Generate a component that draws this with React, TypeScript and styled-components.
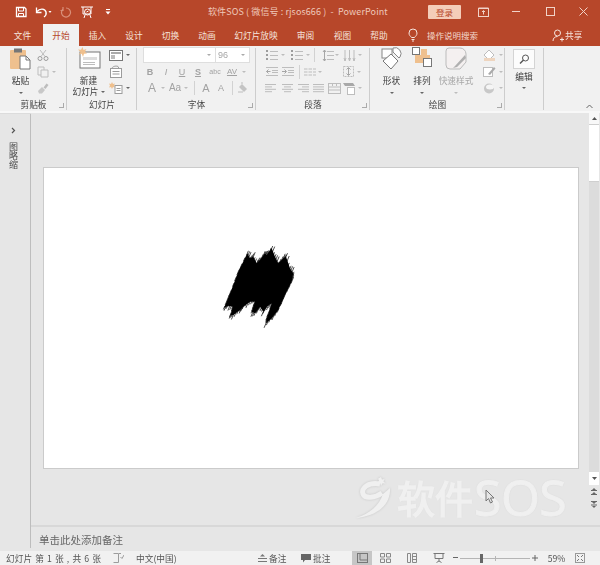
import React from "react";
import styled, { createGlobalStyle } from "styled-components";

const Global = createGlobalStyle`
  html, body { margin: 0; padding: 0; background: #e6e6e6; }
  body { font-family: "Noto Sans CJK SC", "Noto Sans", sans-serif; }
`;

const DK = "#555";
const MD = "#9c9c9c";
const LT = "#bdbdbd";
const OR = "#efc08e";

const Page = styled.div`
  position: relative; width: 600px; height: 565px; overflow: hidden;
  display: flex; flex-direction: column; filter: blur(0.3px);
`;
const TitleBar = styled.div`
  height: 23px; background: #b7472a; display: flex; align-items: center; flex: none;
`;
const Qat = styled.div`
  width: 208px; display: flex; align-items: center; padding-left: 15px; box-sizing: border-box;
`;
const Sp = styled.span<{ $w: number }>`
  display: block; width: ${p => p.$w}px; flex: none;
`;
const Title = styled.div`
  width: 220px; color: #efc9bb; font-size: 9px; white-space: pre; letter-spacing: .1px;
`;
const Login = styled.div`
  width: 33px; height: 14px; background: #f4cdb9; color: #b7472a; font-size: 8.5px; border-radius: 1px;
  display: flex; align-items: center; justify-content: center; flex: none;
`;
const WinBtn = styled.div<{ $w: number }>`
  width: ${p => p.$w}px; height: 23px; display: flex; align-items: center; justify-content: center; flex: none;
`;
const TabBar = styled.div`
  height: 23px; background: #b7472a; display: flex; align-items: flex-end; padding-left: 2px; flex: none;
`;
const Tab = styled.div<{ $active?: boolean; $w: number }>`
  width: ${p => p.$w}px; height: 22px; flex: none; display: flex; align-items: center; justify-content: center;
  font-size: 8.7px; white-space: nowrap;
  color: ${p => (p.$active ? "#b7472a" : "#f6e4dd")};
  background: ${p => (p.$active ? "#f1f1f1" : "transparent")};
`;
const Search = styled.div`
  display: flex; align-items: center; height: 22px; gap: 9px; margin-left: 11px; color: #f3d8cd; font-size: 8.5px; white-space: nowrap;
`;
const Share = styled.div`
  display: flex; align-items: center; height: 22px; gap: 1px; margin-left: 74px; color: #f6e4dd; font-size: 8.7px; white-space: nowrap;
`;
const Ribbon = styled.div`
  position: relative; height: 65px; background: #f1f1f1; display: flex; flex: none; border-bottom: 2px solid #f8f8f8;
  box-shadow: 0 1px 0 #dcdcdc;
`;
const Group = styled.div<{ $w: number }>`
  position: relative; width: ${p => p.$w}px; flex: none; box-sizing: border-box;
  display: flex; flex-direction: column;
  &::after {
    content: ""; position: absolute; right: 0; top: 2px; bottom: 1px; width: 1px; background: #cdcdcd;
  }
`;
const GroupBody = styled.div<{ $pl: number; $gap?: number }>`
  height: 53px; display: flex; padding: 1px 0 0 ${p => p.$pl}px; gap: ${p => p.$gap ?? 0}px; box-sizing: border-box;
`;
const GroupLabel = styled.div`
  height: 12px; line-height: 12px; text-align: center; font-size: 8.7px; color: #444; white-space: nowrap;
`;
const Launcher = styled.div`
  position: absolute; right: 3px; bottom: 3px; width: 5px; height: 5px; border-left: 1px solid #aaa; border-bottom: 1px solid #aaa;
  box-sizing: border-box; transform: scaleX(-1);
`;
const BigBtn = styled.div<{ $w: number; $dim?: boolean }>`
  width: ${p => p.$w}px; display: flex; flex-direction: column; align-items: center; flex: none;
  font-size: 8.7px; line-height: 10.5px; color: ${p => (p.$dim ? "#a8a8a8" : "#3c3c3c")}; white-space: nowrap;
`;
const BigIcon = styled.div<{ $h: number }>`
  height: ${p => p.$h}px; display: flex; align-items: flex-start; justify-content: center; flex: none;
`;
const Arrow = styled.span<{ $c?: string; $ml?: number }>`
  display: inline-block; flex: none; width: 0; height: 0; border-left: 2px solid transparent; border-right: 2px solid transparent;
  border-top: 2.5px solid ${p => p.$c ?? "#666"}; margin-left: ${p => p.$ml ?? 0}px; vertical-align: middle;
`;
const Rows = styled.div<{ $w?: number }>`
  display: flex; flex-direction: column; ${p => (p.$w ? `width:${p.$w}px;` : "")} flex: none;
`;
const Row = styled.div<{ $gap?: number; $pl?: number }>`
  height: 16.5px; display: flex; align-items: center; gap: ${p => p.$gap ?? 0}px; padding-left: ${p => p.$pl ?? 0}px;
`;
const ComboRow = styled.div`
  display: flex; height: 16px; width: 107px; background: #fff; border: 1px solid #dedede; box-sizing: border-box; margin-bottom: .5px;
`;
const ComboPart = styled.div<{ $w: number; $line?: boolean }>`
  width: ${p => p.$w}px; display: flex; align-items: center; justify-content: space-between; padding: 0 4px 0 2px; box-sizing: border-box;
  font-size: 9px; color: #a6a6a6; font-family: "Liberation Sans", sans-serif;
  ${p => (p.$line ? "border-right: 1px solid #dedede;" : "")}
`;
const Fmt = styled.span<{ $w: number; $b?: boolean; $i?: boolean; $u?: boolean; $s?: number }>`
  width: ${p => p.$w}px; flex: none; text-align: center; font-family: "Liberation Sans", sans-serif; color: #a2a2a2;
  font-size: ${p => p.$s ?? 9}px; line-height: 12px;
  font-weight: ${p => (p.$b ? 700 : 400)}; font-style: ${p => (p.$i ? "italic" : "normal")};
  text-decoration: ${p => (p.$u ? "underline" : "none")};
`;
const VSep = styled.span`
  width: 1px; height: 14px; background: #d2d2d2; flex: none;
`;
const EditBox = styled.div`
  width: 22px; height: 20px; background: #fcfcfc; border: 1px solid #d4d4d4; box-sizing: border-box;
  display: flex; align-items: center; justify-content: center; margin: 2px 0 3px;
`;
const Collapse = styled.div`
  position: absolute; right: 7px; bottom: 2px; display: flex;
`;
const Main = styled.div`
  flex: 1; display: flex; min-height: 0;
`;
const Side = styled.div`
  width: 31px; box-sizing: border-box; border-right: 1px solid #bdbdbd; background: #e6e6e6; flex: none;
  display: flex; flex-direction: column; align-items: center; padding: 14px 3px 0 0; gap: 8px; margin-bottom: 3px;
`;
const SideText = styled.div`
  width: 9px; font-size: 9px; line-height: 9px; color: #4a4a4a; text-align: center;
`;
const Work = styled.div`
  flex: 1; display: flex; flex-direction: column; min-width: 0;
`;
const Canvas = styled.div`
  position: relative; flex: 1; display: flex; background: #e6e6e6; min-height: 0;
`;
const SlideArea = styled.div`
  flex: 1; padding: 54px 0 0 12px; min-width: 0;
`;
const Slide = styled.div`
  position: relative; width: 536px; height: 302px; box-sizing: border-box; background: #fff; border: 1px solid #cbcbcb;
`;
const Scribble = styled.svg`
  position: absolute; left: 178px; top: 78px;
`;
const Scroll = styled.div`
  width: 10px; flex: none; display: flex; flex-direction: column; margin: 0 1px 15px 0;
`;
const ScrollBtn = styled.div<{ $h: number; $bg?: string }>`
  height: ${p => p.$h}px; background: ${p => p.$bg ?? "transparent"}; display: flex; align-items: center; justify-content: center; flex: none;
  box-sizing: border-box;
`;
const Thumb = styled.div`
  height: 58px; background: #fff; flex: none; border-top: 1px solid #cfcfcf; border-bottom: 1px solid #cfcfcf; box-sizing: border-box;
`;
const Track = styled.div`
  flex: 1; background: #dcdcdc;
`;
const Notes = styled.div`
  height: 26px; flex: none; box-sizing: border-box; border-top: 2px solid #d8d8d8; background: #e6e6e6; padding-left: 8px;
  display: flex; align-items: center; font-size: 10.5px; color: #666;
`;
const Watermark = styled.div`
  position: absolute; left: 324px; top: 362px; display: flex; align-items: center; color: #f0f0f0; gap: 5px;
  text-shadow: 0 0 1.5px #c4c4c4;
`;
const WmCjk = styled.span`
  font-size: 38px; line-height: 44px; white-space: nowrap; -webkit-text-stroke: 1.5px #f0f0f0;
`;
const WmLatin = styled.span`
  font-family: "Open Sans", sans-serif; font-size: 50px; line-height: 44px; letter-spacing: -.5px; margin-left: -4px;
  -webkit-text-stroke: 1px #f0f0f0;
`;
const WmLogo = styled.div`
  filter: drop-shadow(0 0 1px #c4c4c4); flex: none;
`;
const Cursor = styled.svg`
  position: absolute; left: 454px; top: 376px;
`;
const Status = styled.div`
  height: 14px; background: #f1f1f1; display: flex; align-items: center; flex: none; font-size: 8.7px; color: #555; white-space: pre;
`;
const SItem = styled.div<{ $w: number; $on?: boolean; $center?: boolean; $ws?: number }>`
  width: ${p => p.$w}px; height: 14px; flex: none; display: flex; align-items: center; gap: 2px;
  word-spacing: ${p => p.$ws ?? 0}px;
  justify-content: ${p => (p.$center ? "center" : "flex-start")};
  background: ${p => (p.$on ? "#c6c6c6" : "transparent")};
`;
const ZoomTrack = styled.div`
  position: relative; width: 70px; height: 1px; background: #b5b5b5; flex: none;
`;
const ZoomThumb = styled.div`
  position: absolute; left: 20px; top: -4px; width: 3px; height: 9px; background: #666;
`;
const ZoomTick = styled.div`
  position: absolute; left: 35px; top: -2px; width: 1px; height: 5px; background: #b5b5b5;
`;

const I = ({ w, h, children }: { w: number; h: number; children: React.ReactNode }) => (
  <svg width={w} height={h} viewBox={`0 0 ${w} ${h}`} fill="none" style={{ flex: "none", display: "block" }}>{children}</svg>
);

const Lines = ({ x, ys, w, c }: { x: number; ys: number[]; w: number; c: string }) => (
  <>{ys.map(y => <path key={y} d={`M${x} ${y + .5}h${w}`} stroke={c} />)}</>
);
const ListIcon = () => (
  <I w={14} h={12}>
    {[1, 5, 9].map(y => <rect key={y} x={1} y={y} width={2} height={2} fill={MD} />)}
    <Lines x={5} ys={[2, 6, 10]} w={8} c={LT} />
  </I>
);
const Align = ({ v }: { v: number }) => {
  const ws = v === 3 ? [11, 11, 11, 11] : [11, 7, 11, 7];
  return (
    <I w={11} h={10}>
      {ws.map((w, i) => {
        const x = v === 1 ? (11 - w) / 2 : v === 2 ? 11 - w : 0;
        return <path key={i} d={`M${x} ${1.5 + i * 2.4}h${w}`} stroke={LT} />;
      })}
    </I>
  );
};
const Indent = ({ flip }: { flip?: boolean }) => (
  <I w={13} h={11}>
    <Lines x={1} ys={[1, 9]} w={12} c={LT} />
    <Lines x={7} ys={[4, 6]} w={6} c={LT} />
    <path d={flip ? "M1 5.5h4M3.5 3.5l2 2-2 2" : "M5.5 5.5h-4M3.5 3.5l-2 2 2 2"} stroke="#a6a6a6" />
  </I>
);

const outline: [number, number][] = [
  [2, 62], [8.7, 45.7], [16.3, 25.7], [25.3, 7.3], [28, 12.3], [31.3, 10.7], [34.7, 17.3], [38, 14], [43, 7.3], [44.7, 9],
  [49.7, 2.3], [53, 10.7], [56.3, 17.3], [61.3, 12.3], [64, 10.7], [68, 22.3], [71.3, 27.3], [69.7, 35.7], [63, 49], [56.3, 64],
  [49.7, 72.3], [44, 77.3], [45.3, 70.7], [49.7, 57.3], [44.7, 60.7], [41.3, 65.7], [38, 60.7], [33, 67.3], [29.7, 65.7], [33, 55.7],
  [28, 55.7], [21.3, 60.7], [18, 64], [11.3, 69], [8.7, 69], [10.7, 60.7], [6.3, 59.7],
];
const scribblePath = "M" + outline.map(p => p.join(" ")).join("L") + "Z";
const fringe = outline.flatMap(([x, y], i) => {
  const [nx, ny] = outline[(i + 1) % outline.length];
  const up = i >= 3 && i < 18;
  return [0, 0.33, 0.66].map((t, j) => {
    const px = x + (nx - x) * t;
    const py = y + (ny - y) * t;
    const len = 1.5 + ((i * 7 + j * 5) % 4);
    const dir = up ? -1 : 1;
    return `M${(px + dir * 0.8).toFixed(1)} ${(py - dir * 2).toFixed(1)}l${(-dir * 0.42 * (len + 2)).toFixed(1)} ${(dir * (len + 2)).toFixed(1)}`;
  });
}).join("");

export default function App() {
  return (
    <Page>
      <Global />
      <TitleBar>
        <Qat>
          <I w={12} h={12}>
            <path d="M1.5 1.5h8l1.5 1.5v7.5h-9.5z" stroke="#fff" strokeWidth="1.3" />
            <path d="M3.5 2v3h5V2M3.5 11V7.5h5V11" stroke="#fff" />
          </I>
          <Sp $w={8} />
          <I w={17} h={12}>
            <path d="M2 5.5c3-3.5 8-3 9 .5.5 2-.5 4-2 5" stroke="#fff" strokeWidth="1.4" />
            <path d="M1.5 1.5v5h5" stroke="#fff" strokeWidth="1.3" />
            <path d="M13.5 5h3l-1.5 2z" fill="#fff" />
          </I>
          <Sp $w={8} />
          <I w={12} h={12}>
            <path d="M6 2a4.5 4.5 0 1 1-3.5 1.7M3 1v3.5H.5" stroke="#d98f79" strokeWidth="1.2" />
          </I>
          <Sp $w={8} />
          <I w={14} h={14}>
            <path d="M1 2h12M3 2v7h8V2" stroke="#fff" />
            <circle cx="7.5" cy="7" r="3" stroke="#fff" />
            <path d="M6.5 7l2-1M5 10l-1 3M10 10l1 3" stroke="#fff" />
          </I>
          <Sp $w={11} />
          <I w={6} h={7}>
            <path d="M1 1.5h4" stroke="#fff" />
            <path d="M.5 3.5h5L3 6.5z" fill="#fff" />
          </I>
        </Qat>
        <Title>软件SOS ( 微信号 : rjsos666 )  -  PowerPoint</Title>
        <Login>登录</Login>
        <WinBtn $w={44}>
          <I w={11} h={10}>
            <rect x=".5" y="1.5" width="10" height="8" stroke="#f1d3c8" />
            <path d="M.5 1h10M5.5 7.5V4M4 5l1.5-1.5L7 5" stroke="#f1d3c8" />
          </I>
        </WinBtn>
        <WinBtn $w={22}>
          <I w={8} h={2}><path d="M0 .5h8" stroke="#f1d3c8" /></I>
        </WinBtn>
        <WinBtn $w={46}>
          <I w={9} h={9}><rect x=".5" y=".5" width="8" height="8" stroke="#f1d3c8" /></I>
        </WinBtn>
        <WinBtn $w={20}>
          <I w={9} h={9}><path d="M.5.5l8 8M8.5.5l-8 8" stroke="#f1d3c8" /></I>
        </WinBtn>
      </TitleBar>

      <TabBar>
        <Tab $w={41}>文件</Tab>
        <Tab $w={36} $active>开始</Tab>
        <Tab $w={37}>插入</Tab>
        <Tab $w={36}>设计</Tab>
        <Tab $w={37}>切换</Tab>
        <Tab $w={36}>动画</Tab>
        <Tab $w={62}>幻灯片放映</Tab>
        <Tab $w={37}>审阅</Tab>
        <Tab $w={37}>视图</Tab>
        <Tab $w={36}>帮助</Tab>
        <Search>
          <I w={10} h={14}>
            <path d="M3.5 9.5C2.5 8 1 7.500 1 5a4 4 0 0 1 8 0c0 2.500-1.500 3-2.500 4.500zM3.500 11.500h3M4 13h2" stroke="#f6e4dd" />
          </I>
          操作说明搜索
        </Search>
        <Share>
          <I w={12} h={13}>
            <circle cx="5.500" cy="4" r="3" stroke="#f6e4dd" />
            <path d="M1 12c0-3 2-4.500 4.500-4.500M8 10.500h4M10 8.500v4" stroke="#f6e4dd" />
          </I>
          共享
        </Share>
      </TabBar>

      <Ribbon>
        <Group $w={67}>
          <GroupBody $pl={7} $gap={3}>
            <BigBtn $w={27}>
              <BigIcon $h={29}>
                <I w={21} h={24}>
                  <rect x="0" y="3" width="16" height="19" rx="1" fill={OR} />
                  <rect x="4" y="1.500" width="8" height="4" fill="#777" />
                  <path d="M10 9h6l4 4v9H10z" fill="#fff" stroke="#777" />
                  <path d="M16 9v4h4" stroke="#777" />
                </I>
              </BigIcon>
              粘贴
              <BigIcon $h={10}><Arrow style={{ marginTop: 5 }} /></BigIcon>
            </BigBtn>
            <Rows>
              <Row>
                <I w={12} h={12}>
                  <path d="M3 1l5 6.500M9 1L4 7.500" stroke={LT} />
                  <circle cx="3" cy="9.500" r="2" stroke={MD} />
                  <circle cx="9" cy="9.500" r="2" stroke={MD} />
                </I>
              </Row>
              <Row $gap={3}>
                <I w={12} h={12}>
                  <path d="M1 1h6v8H1z" stroke={LT} />
                  <path d="M4 4h7v7H4z" fill="#f1f1f1" stroke={LT} />
                </I>
                <Arrow $c={LT} />
              </Row>
              <Row>
                <I w={12} h={12}>
                  <path d="M6.500 5.500l3-4 2 1.500-3 4z" fill={LT} />
                  <path d="M1 9l4-4 3 3-3 3.500H2z" fill="#c8c8c8" />
                </I>
              </Row>
            </Rows>
          </GroupBody>
          <GroupLabel>剪贴板</GroupLabel>
          <Launcher />
        </Group>

        <Group $w={70}>
          <GroupBody $pl={4} $gap={3}>
            <BigBtn $w={35}>
              <BigIcon $h={29}>
                <I w={24} h={24}>
                  <rect x="3" y="5" width="20" height="16" fill="#fff" stroke="#777" />
                  <rect x="6" y="10" width="14" height="3" fill="#ddd" />
                  <Lines x={6} ys={[15, 17]} w={12} c={LT} />
                  <path d="M5.500 0l1 3 3-1-1.500 2.500 2 2-3 .2L6 10 4.800 6.800l-3 .7 1.700-2.500L1 2.500l3 .2z" fill={OR} />
                </I>
              </BigIcon>
              新建
              <span>幻灯片<Arrow $ml={2} /></span>
            </BigBtn>
            <Rows>
              <Row $gap={3}>
                <I w={14} h={11}>
                  <rect x=".5" y=".5" width="13" height="10" fill="#fff" stroke="#777" />
                  <rect x="2" y="2" width="10" height="2" fill="#aaa" />
                  <rect x="2" y="5" width="4" height="4" fill="#bbb" />
                </I>
                <Arrow />
              </Row>
              <Row>
                <I w={14} h={13}>
                  <rect x="1.500" y="3.500" width="11" height="9" fill="#fff" stroke={MD} />
                  <path d="M3 3.500C3 1.500 7 .5 9 1.500l1 2M3.500 6.500h7M3.500 9h7" stroke={MD} />
                </I>
              </Row>
              <Row $gap={3}>
                <I w={14} h={13}>
                  <path d="M3 0l1 2 2-.5L5 3.500l1 2-2-.5L3 7 2 5 0 5.500l1-2-1-2 2 .5z" fill={OR} />
                  <rect x="6" y="3.500" width="7" height="8" fill="#fff" stroke={MD} />
                  <Lines x={7.500} ys={[6, 8]} w={4} c={MD} />
                </I>
                <Arrow />
              </Row>
            </Rows>
          </GroupBody>
          <GroupLabel>幻灯片</GroupLabel>
        </Group>

        <Group $w={119}>
          <GroupBody $pl={6}>
            <Rows>
              <ComboRow>
                <ComboPart $w={72} $line><span /><Arrow $c="#aaa" /></ComboPart>
                <ComboPart $w={33}>96<Arrow $c="#aaa" /></ComboPart>
              </ComboRow>
              <Row $gap={4} $pl={1}>
                <Fmt $w={12} $b>B</Fmt>
                <Fmt $w={12} $i>I</Fmt>
                <Fmt $w={12} $u>U</Fmt>
                <Fmt $w={12} $b $u>S</Fmt>
                <Fmt $w={14} $s={7}>abc</Fmt>
                <Fmt $w={12} $s={8} $u>AV</Fmt>
                <Arrow $c={LT} />
              </Row>
              <Row>
                <Sp $w={2} />
                <Fmt $w={14} $s={12}>A</Fmt>
                <Sp $w={2} />
                <Arrow $c={LT} />
                <Sp $w={1} />
                <Fmt $w={18} $s={10}>Aa</Fmt>
                <Arrow $c={LT} />
                <Sp $w={6} />
                <VSep />
                <Sp $w={4} />
                <Fmt $w={14} $s={11}>A</Fmt>
                <Sp $w={1.5} />
                <Fmt $w={13} $s={9}>A</Fmt>
                <Sp $w={4.5} />
                <VSep />
                <Sp $w={4} />
                <I w={12} h={12}>
                  <path d="M2 5l3-3 5 5-3 3z" fill="#c4c4c4" />
                  <path d="M4 1h2M1 10h5" stroke={LT} />
                </I>
              </Row>
            </Rows>
          </GroupBody>
          <GroupLabel>字体</GroupLabel>
          <Launcher />
        </Group>

        <Group $w={114}>
          <GroupBody $pl={9}>
            <Rows>
              <Row>
                <ListIcon /><Sp $w={2} /><Arrow $c={LT} />
                <Sp $w={5} />
                <ListIcon /><Sp $w={2} /><Arrow $c={LT} />
                <Sp $w={4} />
                <VSep />
                <Sp $w={7} />
                <I w={12} h={13}>
                  <path d="M2.500 1v11M1 3l1.500-2L4 3M1 10l1.500 2L4 10" stroke="#a6a6a6" />
                  <Lines x={5} ys={[2, 6, 10]} w={7} c={LT} />
                </I>
                <Sp $w={1} /><Arrow $c={LT} />
                <Sp $w={4} />
                <I w={13} h={13}>
                  <path d="M2 1v11M6.500 1v11M11 1v11M1 9l1 3 1-3M5.500 9l1 3 1-3M10 9l1 3 1-3" stroke={LT} />
                </I>
                <Sp $w={2} /><Arrow $c={LT} />
              </Row>
              <Row>
                <Indent />
                <Sp $w={3} />
                <Indent flip />
                <Sp $w={5} />
                <VSep />
                <Sp $w={4} />
                <I w={12} h={10}>
                  <path d="M0 2h3.500M4.500 2H8M9 2h3M0 5h3.500M4.500 5H8M9 5h3M0 8h3.500M4.500 8H8M9 8h3" stroke={LT} />
                </I>
                <Sp $w={2} /><Arrow $c={LT} />
                <Sp $w={20} />
                <I w={13} h={13}>
                  <rect x="1.500" y="1.500" width="10" height="10" stroke={LT} strokeDasharray="2 1" />
                  <path d="M6.500 3v7M4.500 4.500l2-2 2 2M4.500 8.500l2 2 2-2" stroke="#a6a6a6" />
                </I>
                <Sp $w={2} /><Arrow $c={LT} />
              </Row>
              <Row>
                <Align v={0} /><Sp $w={6} /><Align v={1} /><Sp $w={5} /><Align v={2} /><Sp $w={4} /><Align v={3} />
                <Sp $w={4} />
                <I w={13} h={13}>
                  <rect x=".5" y="1.500" width="12" height="10" stroke={LT} />
                  <path d="M.5 5h12M.5 8h12M4.500 1v3M8.500 1v3" stroke={LT} />
                </I>
                <Sp $w={2} />
                <I w={13} h={13}>
                  <path d="M0 1h10l2 3H2z" fill="#a8a8a8" />
                  <rect x="4.500" y="5.500" width="7" height="7" fill="#fff" stroke={LT} />
                </I>
                <Sp $w={2} /><Arrow $c={LT} />
              </Row>
            </Rows>
          </GroupBody>
          <GroupLabel>段落</GroupLabel>
          <Launcher />
        </Group>

        <Group $w={135}>
          <GroupBody $pl={11}>
            <BigBtn $w={21}>
              <BigIcon $h={29}>
                <I w={22} h={24}>
                  <rect x="1" y="2" width="10" height="9" fill="#fff" stroke="#888" />
                  <path d="M12 1a6 6 0 0 1 7 9l-1 1-6-6z" fill="#fff" stroke="#888" />
                  <path d="M10 7l7 7-7 8-8-8z" fill="#fff" stroke="#777" />
                </I>
              </BigIcon>
              形状
              <BigIcon $h={10}><Arrow style={{ marginTop: 5 }} /></BigIcon>
            </BigBtn>
            <Sp $w={10} />
            <BigBtn $w={20}>
              <BigIcon $h={29}>
                <I w={20} h={22}>
                  <rect x="3" y="8" width="15" height="8" fill={OR} />
                  <rect x="9" y="2" width="6" height="8" fill={OR} />
                  <rect x=".5" y=".5" width="7" height="7" fill="#fff" stroke="#777" />
                  <rect x="11.500" y="11.500" width="8" height="8" fill="#fff" stroke="#777" />
                </I>
              </BigIcon>
              排列
              <BigIcon $h={10}><Arrow style={{ marginTop: 5 }} /></BigIcon>
            </BigBtn>
            <Sp $w={6} />
            <BigBtn $w={36} $dim>
              <BigIcon $h={29}>
                <I w={22} h={23}>
                  <path d="M4 1h11a6 6 0 0 1 6 6v8l-6 7H5a4 4 0 0 1-4-4V4a3 3 0 0 1 3-3z" fill="#f4f0f0" stroke="#bbb" />
                  <path d="M20 8L10 19l-2 2 4-1 9-9z" fill="#b0b0b0" />
                </I>
              </BigIcon>
              快速样式
              <BigIcon $h={10}><Arrow $c={LT} style={{ marginTop: 5 }} /></BigIcon>
            </BigBtn>
            <Sp $w={9} />
            <Rows>
              <Row $gap={3}>
                <I w={13} h={13}>
                  <path d="M1 6l5-5 5 5-5 5z" fill="#fff" stroke={LT} />
                  <rect x="1" y="9" width="11" height="3" fill="#eed5bf" />
                </I>
                <Arrow $c={LT} />
              </Row>
              <Row $gap={3}>
                <I w={13} h={13}>
                  <rect x=".5" y="2.500" width="9" height="9" fill="#fff" stroke={LT} />
                  <path d="M5 9l6-7 1.500 1.500L7 10z" fill="#aaa" />
                </I>
                <Arrow $c={LT} />
              </Row>
              <Row $gap={3}>
                <I w={13} h={13}>
                  <circle cx="6" cy="6.500" r="5" fill="#c8c8c8" />
                  <ellipse cx="7" cy="5" rx="4" ry="2.500" fill="#f5f5f5" />
                </I>
                <Arrow $c={LT} />
              </Row>
            </Rows>
          </GroupBody>
          <GroupLabel>绘图</GroupLabel>
          <Launcher />
        </Group>

        <Group $w={39}>
          <GroupBody $pl={7}>
            <BigBtn $w={24}>
              <EditBox>
                <I w={11} h={11}>
                  <circle cx="6.500" cy="4" r="3" stroke={DK} />
                  <path d="M4.500 6L1 9.500" stroke={DK} strokeWidth="1.500" />
                </I>
              </EditBox>
              编辑
              <BigIcon $h={8}><Arrow style={{ marginTop: 4 }} /></BigIcon>
            </BigBtn>
          </GroupBody>
        </Group>
        <Collapse>
          <I w={7} h={5}><path d="M.5 4L3.500 1l3 3" stroke="#666" /></I>
        </Collapse>
      </Ribbon>

      <Main>
        <Side>
          <I w={5} h={7}><path d="M1 1l2.500 2.500L1 6" stroke="#555" strokeWidth="1.200" /></I>
          <SideText>图<br />略<br />缩</SideText>
        </Side>
        <Work>
          <Canvas>
            <SlideArea>
              <Slide>
                <Scribble width={76} height={84} viewBox="0 0 76 84">
                  <path fill="#000" d={scribblePath} />
                  <path stroke="#000" strokeWidth=".7" d={fringe} />
                </Scribble>
              </Slide>
            </SlideArea>
            <Scroll>
              <ScrollBtn $h={11} $bg="#f8f8f8"><I w={5} h={3}><path d="M0 3l2.500-3L5 3z" fill="#555" /></I></ScrollBtn>
              <Thumb />
              <Track />
              <ScrollBtn $h={13} $bg="#fff"><I w={5} h={3}><path d="M0 0l2.500 3L5 0z" fill="#555" /></I></ScrollBtn>
              <ScrollBtn $h={13}><I w={6} h={7}><path d="M0 6.500h6M0 2.500h6" stroke="#666" /><path d="M1 2L3 0l2 2zM1 6l2-2 2 2z" fill="#666" /></I></ScrollBtn>
              <ScrollBtn $h={12}><I w={6} h={7}><path d="M0 .5h6M0 4h6" stroke="#666" /><path d="M1 1l2 2 2-2zM1 5l2 2 2-2z" fill="#666" /></I></ScrollBtn>
            </Scroll>
            <Watermark>
              <WmLogo>
                <I w={37} h={43}>
                  <path d="M25 8C13 6 6 12 8 18c2 5 12 4 19-1" stroke="#f0f0f0" strokeWidth="5" />
                  <path d="M1 42c13-4 23-12 27-24l7-6c1 16-12 28-34 30z" fill="#f0f0f0" />
                  <path d="M26 1l1 2.500 2.500-.5-1 2.500 2 2-3-.2L26 10l-1-3-3 .2 2-2.500-1-2z" fill="#f0f0f0" />
                </I>
              </WmLogo>
              <WmCjk>软件</WmCjk>
              <WmLatin>SOS</WmLatin>
            </Watermark>
            <Cursor width={10} height={16} viewBox="0 0 10 16">
              <path d="M1 1v11l2.500-2.500L5.500 14l2-1-2-4h3.500z" fill="#e6e6e6" stroke="#777" />
            </Cursor>
          </Canvas>
          <Notes>单击此处添加备注</Notes>
        </Work>
      </Main>

      <Status>
        <Sp $w={6} />
        <SItem $w={107} $ws={1.2}>幻灯片 第 1 张 , 共 6 张</SItem>
        <SItem $w={23}>
          <I w={11} h={10}>
            <path d="M.5.5h5v9h-5M6 .5h2M7.500 4l1.500 1.500L11 2" stroke={MD} />
          </I>
        </SItem>
        <SItem $w={122}>中文(中国)</SItem>
        <SItem $w={43}>
          <I w={9} h={10}><path d="M0 5.500h9M0 8.500h9" stroke="#777" /><path d="M2 3.500L4.500 1 7 3.500z" fill="#777" /></I>
          备注
        </SItem>
        <SItem $w={51}>
          <I w={10} h={10}><path d="M0 1h10v6H4l-2 2.500V7H0z" fill="#666" /></I>
          批注
        </SItem>
        <SItem $w={20} $on $center>
          <I w={11} h={10}><rect x=".5" y=".5" width="10" height="9" stroke="#777" /><path d="M3 1v6h7" stroke="#777" /></I>
        </SItem>
        <SItem $w={26} $center>
          <I w={11} h={10}><path d="M.5.500h4v3.500h-4zM6.500.500h4v3.500h-4zM.5 6h4v3.500h-4zM6.500 6h4v3.500h-4z" stroke="#888" /></I>
        </SItem>
        <SItem $w={28} $center>
          <I w={10} h={10}><path d="M.5.500h3v9h-3zM5.500.500h4v9h-4zM5.500 3.500h4M5.500 6.500h4" stroke="#888" /></I>
        </SItem>
        <SItem $w={25} $center>
          <I w={12} h={10}><path d="M.5.500h11M2 .5v5h8v-5M6 5.500V8M3.500 9.500L6 8l2.500 1.500" stroke="#777" /></I>
        </SItem>
        <SItem $w={9} $center><I w={5} h={2}><path d="M0 .5h5" stroke="#666" /></I></SItem>
        <ZoomTrack><ZoomThumb /><ZoomTick /></ZoomTrack>
        <SItem $w={10} $center><I w={6} h={6}><path d="M0 3h6M3 0v6" stroke="#666" /></I></SItem>
        <SItem $w={33} $center>59%</SItem>
        <SItem $w={14} $center>
          <I w={10} h={10}><rect x=".5" y=".5" width="9" height="9" stroke="#999" /><path d="M2 2l2 2M8 8L6 6M8 2L6 4M2 8l2-2" stroke="#777" /></I>
        </SItem>
      </Status>
    </Page>
  );
}
